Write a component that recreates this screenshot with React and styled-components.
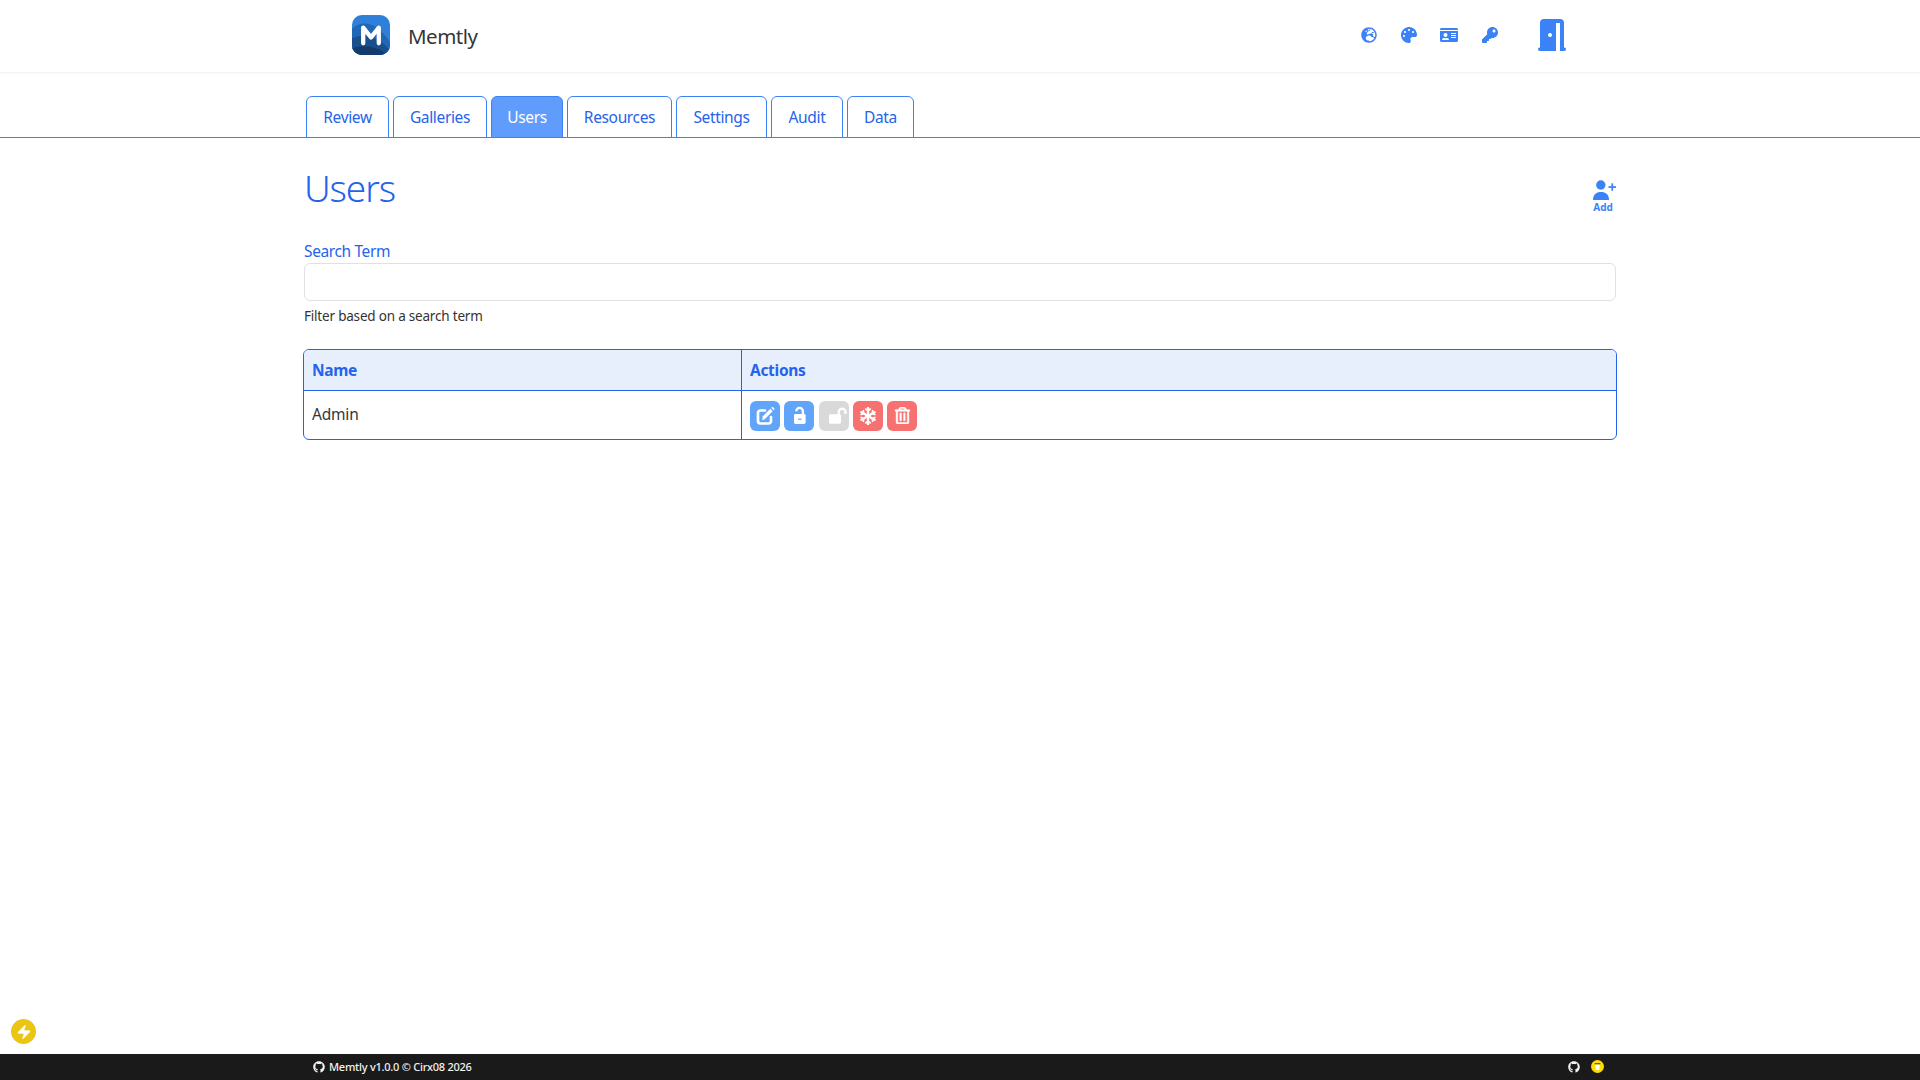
import React from "react";
import styled, { createGlobalStyle } from "styled-components";
import { FaGlobeEurope, FaPalette, FaIdCard, FaKey, FaRegTrashAlt, FaGithub, FaSnowflake } from "react-icons/fa";
import { Zap } from "lucide-react";

const Global = createGlobalStyle`
  * { box-sizing: border-box; }
  html, body { margin: 0; padding: 0; background: #fff; }
  body { font-family: "Noto Sans", "Open Sans", sans-serif; color: #363636; font-size: 16px; }
`;

const Page = styled.div`
  min-height: 100vh;
  display: flex;
  flex-direction: column;
`;

const Navbar = styled.header`
  height: 73px;
  border-bottom: 1px solid #f3f4f8;
  box-shadow: 0 1px 2px rgba(30, 60, 120, 0.03);
  display: flex;
  align-items: center;
  padding-left: 352px;
  padding-right: 354px;
`;

const Brand = styled.div`
  display: flex;
  align-items: center;
  gap: 18px;
  margin-right: auto;
  margin-top: -2px;
`;

const BrandName = styled.span`
  font-size: 20.5px;
  letter-spacing: -0.5px;
  color: #363636;
  margin-top: 1px;
`;

const NavIcons = styled.nav`
  display: flex;
  align-items: center;
  gap: 23.67px;
  color: #3b82f6;
  font-size: 16px;
`;

const NavIcon = styled.span`
  display: flex;
  width: ${(p) => p.$w || 16}px;
  justify-content: center;
  margin-top: -3px;
`;

const DoorLink = styled.span`
  display: flex;
  margin-left: 40px;
  margin-top: -3px;
`;

const TabsRow = styled.div`
  margin-top: 23px;
  height: 42px;
  border-bottom: 1px solid #3b82f6;
  padding-left: 306px;
  display: flex;
  gap: 4px;
`;

const Tab = styled.a`
  height: 42px;
  display: flex;
  align-items: center;
  justify-content: center;
  width: ${(p) => p.$w}px;
  font-size: 15.5px;
  letter-spacing: -0.35px;
  border: 1px solid #3b82f6;
  border-radius: 6px 6px 0 0;
  color: ${(p) => (p.$active ? "#fff" : "#2563eb")};
  background: ${(p) => (p.$active ? "#609cfb" : "#fff")};
`;

const Main = styled.main`
  width: 1312px;
  margin: 0 auto;
`;

const TitleRow = styled.div`
  display: flex;
  justify-content: space-between;
  align-items: flex-start;
  margin-top: 20px;
`;

const Title = styled.h1`
  margin: 0;
  font-size: 37px;
  line-height: 60px;
  font-weight: 300;
  letter-spacing: -1.1px;
  color: #2563eb;
`;

const AddButton = styled.button`
  background: none;
  border: 0;
  padding: 0;
  margin-top: 22px;
  color: #3b82f6;
  display: flex;
  flex-direction: column;
  align-items: center;
  gap: 1px;
  font: 700 10px/12px "Noto Sans", sans-serif;
  width: 23px;
  & > span { margin-right: 3px; }
`;

const Field = styled.div`
  margin-top: 21px;
`;

const Label = styled.label`
  display: block;
  color: #2563eb;
  font-size: 15.5px;
  line-height: 24px;
  letter-spacing: -0.38px;
`;

const Input = styled.input`
  display: block;
  width: 100%;
  height: 38px;
  border: 1px solid #dfe1e5;
  border-radius: 6px;
  background: #fff;
  outline: none;
`;

const Help = styled.p`
  margin: 5px 0 0;
  font-size: 13.5px;
  line-height: 21px;
  letter-spacing: -0.2px;
  color: #333;
`;

const TableFrame = styled.table`
  margin: 22px 0 0 -1px;
  width: calc(100% + 2px);
  table-layout: fixed;
  border-collapse: separate;
  border-spacing: 0;
  border: 1px solid #2563eb;
  border-radius: 6px;
  overflow: hidden;
`;

const HeadCell = styled.th`
  height: 41px;
  background: #e8effc;
  color: #2563eb;
  text-align: left;
  font-size: 15.5px;
  font-weight: 700;
  padding: 0 8px;
  letter-spacing: -0.3px;
  border-bottom: 1px solid #2563eb;
  &:first-child { border-right: 1px solid #2563eb; width: 438px; }
`;

const BodyCell = styled.td`
  height: 48px;
  padding: 1px 8px 0;
  font-size: 15.5px;
  letter-spacing: -0.2px;
  color: #363636;
  &:first-child { border-right: 1px solid #2563eb; padding: 0 8px 3px; }
`;

const Actions = styled.div`
  display: flex;
  gap: 4.25px;
`;

const ActionButton = styled.button`
  width: 30px;
  height: 30px;
  border: 0;
  padding: 0;
  border-radius: 6px;
  color: #fff;
  font-size: 17px;
  display: flex;
  align-items: center;
  justify-content: center;
  background: ${(p) => ({ blue: "#60a5fa", grey: "#d9d9d9", red: "#f87171" })[p.$tone]};
`;

const Footer = styled.footer`
  margin-top: auto;
  height: 26px;
  background: #1a1a1a;
  color: #f2f2f2;
  display: flex;
  align-items: center;
  padding: 0 304px 1px 313px;
  font-size: 11px;
  font-weight: 500;
  letter-spacing: -0.25px;
`;

const FooterLeft = styled.div`
  display: flex;
  align-items: center;
  gap: 4px;
  margin-right: auto;
`;

const FooterRight = styled.div`
  display: flex;
  align-items: center;
  gap: 11px;
  padding-right: 12px;
`;

const Coffee = styled.span`
  width: 13px;
  height: 13px;
  border-radius: 50%;
  background: #ffdd00;
  display: flex;
`;

const BoltBadge = styled.button`
  position: fixed;
  left: 11px;
  bottom: 36px;
  width: 25px;
  height: 25px;
  border: 0;
  padding: 0;
  border-radius: 50%;
  background: #eac514;
  color: #fff;
  display: flex;
  align-items: center;
  justify-content: center;
`;

const Logo = () => (
  <svg width="38" height="40" viewBox="0 0 39 41">
    <defs>
      <clipPath id="lg"><rect width="39" height="41" rx="10" /></clipPath>
    </defs>
    <g clipPath="url(#lg)">
      <rect width="39" height="41" fill="#2f80d8" />
      <path d="M0 14 C12 4 26 8 39 28 V41 H0 Z" fill="#2067b5" />
      <path d="M0 24 C12 18 26 22 39 36 V41 H0 Z" fill="#1a4f8d" />
      <path d="M0 34 C14 30 26 32 36 41 H0 Z" fill="#133c6c" />
      <path d="M11.5 29 V13 L19.5 23 L27.5 13 V29" fill="none" stroke="#fff" strokeWidth="4.4" strokeLinecap="round" strokeLinejoin="round" />
    </g>
  </svg>
);

const DoorIcon = () => (
  <svg width="28" height="32" viewBox="0 0 28 32" fill="#3b82f6">
    <path d="M2 4 a4 4 0 0 1 4-4 H22 a4 4 0 0 1 4 4 V28.5 h.25 a1.75 1.75 0 0 1 0 3.5 H22 V4 H18 V32 H1.75 a1.75 1.75 0 0 1 0-3.5 H2 Z" />
    <circle cx="12" cy="16" r="2" fill="#fff" />
  </svg>
);

const AddUserIcon = () => (
  <svg width="23" height="20" viewBox="0 0 23 20" fill="#3b82f6">
    <circle cx="7.8" cy="5" r="4.7" />
    <path d="M0 20 C0 14.5 3.4 12 8 12 S16 14.5 16 20 Z" />
    <rect x="15.5" y="6.2" width="7.5" height="1.7" />
    <rect x="18.4" y="3.3" width="1.7" height="7.5" />
  </svg>
);

const EditGlyph = () => (
  <svg width="30" height="30" viewBox="0 0 30 30" fill="none" stroke="#fff">
    <path d="M15 9.5 H10.5 a2.5 2.5 0 0 0 -2.5 2.5 V20 a2.5 2.5 0 0 0 2.5 2.5 H18.5 a2.5 2.5 0 0 0 2.5 -2.5 V16" strokeWidth="2.7" strokeLinecap="round" />
    <path d="M13.5 17 L21.5 9" strokeWidth="3.4" />
    <path d="M12 19 L12.8 16 L15 18.2 Z" fill="#fff" stroke="none" />
    <path d="M22.4 8 L23.6 6.8" strokeWidth="3.2" />
  </svg>
);

const UnlockAltGlyph = () => (
  <svg width="30" height="30" viewBox="0 0 30 30">
    <path d="M12.3 10.2 a3.3 3.3 0 0 1 6.6 0 V13.5" fill="none" stroke="#fff" strokeWidth="2.3" />
    <rect x="10" y="13" width="11.6" height="10" rx="1.4" fill="#fff" />
    <rect x="14" y="17.6" width="3.6" height="1.2" fill="#60a5fa" />
  </svg>
);

const UnlockGlyph = () => (
  <svg width="30" height="30" viewBox="0 0 30 30">
    <path d="M19.7 14 V11 a3.4 3.4 0 0 1 6.8 0 V13" fill="none" stroke="#fff" strokeWidth="2.3" />
    <rect x="10" y="13.3" width="12" height="9.4" rx="1.4" fill="#fff" />
  </svg>
);

const CoffeeCup = () => (
  <svg width="13" height="13" viewBox="0 0 13 13">
    <path d="M4.2 4.5 H8.8 L8.2 10 H4.8 Z" fill="#fff" />
    <rect x="3.6" y="3" width="5.8" height="1.3" fill="#7a6200" />
  </svg>
);

const tabs = [
  ["Review", 83], ["Galleries", 94], ["Users", 72], ["Resources", 105],
  ["Settings", 91], ["Audit", 72], ["Data", 67],
];

export default function App() {
  return (
    <Page>
      <Global />
      <Navbar>
        <Brand>
          <Logo />
          <BrandName>Memtly</BrandName>
        </Brand>
        <NavIcons>
          <NavIcon><FaGlobeEurope /></NavIcon>
          <NavIcon><FaPalette /></NavIcon>
          <NavIcon $w={18}><FaIdCard size={18} /></NavIcon>
          <NavIcon><FaKey /></NavIcon>
        </NavIcons>
        <DoorLink><DoorIcon /></DoorLink>
      </Navbar>
      <TabsRow>
        {tabs.map(([t, w]) => (
          <Tab key={t} $w={w} $active={t === "Users"}>{t}</Tab>
        ))}
      </TabsRow>
      <Main>
        <TitleRow>
          <Title>Users</Title>
          <AddButton><AddUserIcon /><span>Add</span></AddButton>
        </TitleRow>
        <Field>
          <Label>Search Term</Label>
          <Input />
          <Help>Filter based on a search term</Help>
        </Field>
        <TableFrame>
          <thead>
            <tr><HeadCell>Name</HeadCell><HeadCell>Actions</HeadCell></tr>
          </thead>
          <tbody>
            <tr>
              <BodyCell>Admin</BodyCell>
              <BodyCell>
                <Actions>
                  <ActionButton $tone="blue"><EditGlyph /></ActionButton>
                  <ActionButton $tone="blue"><UnlockAltGlyph /></ActionButton>
                  <ActionButton $tone="grey"><UnlockGlyph /></ActionButton>
                  <ActionButton $tone="red"><FaSnowflake size={18} /></ActionButton>
                  <ActionButton $tone="red"><FaRegTrashAlt stroke="#fff" strokeWidth={14} /></ActionButton>
                </Actions>
              </BodyCell>
            </tr>
          </tbody>
        </TableFrame>
      </Main>
      <BoltBadge><Zap size={16} fill="currentColor" strokeWidth={1} /></BoltBadge>
      <Footer>
        <FooterLeft><FaGithub size={12} />Memtly v1.0.0 © Cirx08 2026</FooterLeft>
        <FooterRight>
          <FaGithub size={12} />
          <Coffee><CoffeeCup /></Coffee>
        </FooterRight>
      </Footer>
    </Page>
  );
}
